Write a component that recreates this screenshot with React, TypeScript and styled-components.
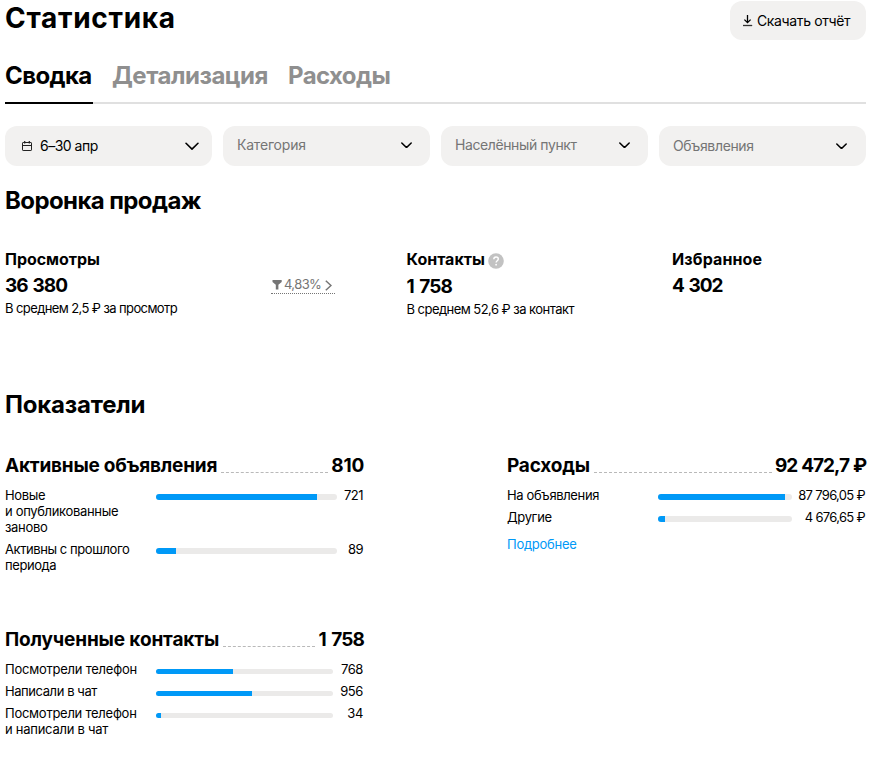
import React from "react";
import styled, { createGlobalStyle } from "styled-components";

const GlobalStyle = createGlobalStyle`
  *, *::before, *::after { box-sizing: border-box; }
  body {
    margin: 0;
    background: #fff;
    color: #000;
    font-family: Inter, "Noto Sans", sans-serif;
  }
  button { font: inherit; color: inherit; border: 0; padding: 0; background: none; }
`;

const Page = styled.main`
  width: 886px;
  min-height: 759px;
  padding: 0 20px 0 5px;
`;

const Text = styled.span<{ $ls?: number; $ws?: number }>`
  letter-spacing: ${(p) => p.$ls ?? 0}px;
  word-spacing: ${(p) => p.$ws ?? 0}px;
  white-space: pre-line;
`;

const Header = styled.header`
  display: flex;
  justify-content: space-between;
  height: 58px;
`;

const Title = styled.h1`
  margin: 0;
  font-size: 28px;
  line-height: 36px;
  font-weight: 700;
`;

const DownloadButton = styled.button`
  display: flex;
  align-items: center;
  gap: 4px;
  width: 136px;
  height: 39px;
  margin-top: 1px;
  padding: 0 0 0 12px;
  border-radius: 12px;
  background: #f2f1f0;
  font-size: 14px;
`;

const Tabs = styled.nav`
  display: flex;
  gap: 19px;
  height: 46px;
  margin-bottom: 22px;
  box-shadow: inset 0 -2px #e0e0e0;
`;

const Tab = styled.button<{ $active?: boolean; $width: number }>`
  display: flex;
  width: ${(p) => p.$width}px;
  padding-top: 3px;
  font-size: 24px;
  line-height: 30px;
  font-weight: 700;
  white-space: nowrap;
  color: ${(p) => (p.$active ? "#000" : "#8f8f8f")};
  border-bottom: 2px solid ${(p) => (p.$active ? "#000" : "transparent")};
`;

const Filters = styled.div`
  display: grid;
  grid-template-columns: repeat(4, 207px);
  gap: 11px;
`;

const Filter = styled.button<{ $filled?: boolean; $padX?: string }>`
  display: flex;
  align-items: center;
  gap: 7px;
  height: 40px;
  padding: ${(p) => p.$padX ?? "0 18px 2px 14px"};
  border-radius: 12px;
  background: #f2f1f0;
  font-size: 14px;
  line-height: 20px;
  color: ${(p) => (p.$filled ? "#000" : "#757575")};
  svg:last-child { margin-left: auto; color: #000; }
`;

const SectionTitle = styled.h2<{ $gap: number }>`
  margin: ${(p) => p.$gap}px 0 0;
  font-size: 24px;
  line-height: 30px;
  font-weight: 700;
`;

const Funnel = styled.section`
  display: grid;
  grid-template-columns: 265px 136.5px 265.5px 1fr;
  height: 140px;
  margin-top: 34px;
`;

const Metric = styled.div`
  display: flex;
  flex-direction: column;
  align-items: flex-start;
`;

const MetricName = styled.div<{ $tall?: boolean }>`
  display: flex;
  align-items: flex-start;
  gap: 3px;
  height: ${(p) => (p.$tall ? 23 : 22)}px;
  font-size: 16px;
  line-height: 19px;
  font-weight: 700;
  svg { margin-top: 3px; }
`;

const MetricValue = styled.div`
  font-size: 19px;
  line-height: 28px;
  font-weight: 700;
`;

const MetricNote = styled.div`
  font-size: 13px;
  line-height: 17px;
  white-space: nowrap;
`;

const Conversion = styled.a`
  display: flex;
  align-items: center;
  gap: 2px;
  width: 64px;
  height: 18px;
  margin: 26px 0 0 1px;
  padding: 0 3px 1px 1px;
  border-bottom: 1px dotted #757575;
  color: #757575;
  font-size: 13px;
  svg:last-child { margin: 2px 0 0 auto; }
`;

const Indicators = styled.section`
  display: grid;
  grid-template-columns: 359px 359px;
  grid-template-rows: 174px auto;
  column-gap: 143px;
  margin-top: 33px;
`;

const IndicatorHead = styled.div`
  display: flex;
  font-size: 19px;
  line-height: 26px;
  font-weight: 700;
  white-space: nowrap;
`;

const Leader = styled.i`
  flex: 1;
  height: 20px;
  margin: 0 3px 0 4px;
  border-bottom: 1px dashed #b9b9b9;
`;

const Bars = styled.div`
  display: grid;
  row-gap: 6px;
  margin-top: 8px;
  font-size: 13px;
  line-height: 16px;
`;

const BarRow = styled.div<{ $track: number }>`
  display: grid;
  grid-template-columns: 151px ${(p) => p.$track}px 1fr;
  white-space: nowrap;
`;

const Track = styled.div<{ $thin?: boolean }>`
  height: ${(p) => (p.$thin ? 5 : 6)}px;
  margin-top: ${(p) => (p.$thin ? 8 : 7)}px;
  border-radius: 3px;
  overflow: hidden;
  background: #ebeae9;
`;

const Fill = styled.div`
  height: 100%;
  background: #0099f7;
`;

const Amount = styled.div`
  padding-right: 1px;
  text-align: right;
`;

const DetailsLink = styled.a`
  display: inline-block;
  margin-top: 11px;
  font-size: 13px;
  line-height: 16px;
  color: #0099f7;
`;

const Chevron = ({ size = 11 }: { size?: number }) => (
  <svg width={size} height={size * 0.6} viewBox="0 0 11 6.6" fill="none" stroke="currentColor" strokeWidth={size > 11 ? 1.25 : 1.5} strokeLinecap="round" strokeLinejoin="round">
    <path d="M.8 1 5.5 5.6 10.2 1" />
  </svg>
);

const DownloadIcon = () => (
  <svg width="11" height="12" viewBox="0 0 11 12" fill="none" stroke="#000" strokeWidth="1.3">
    <path d="M5.5 0v7.5M2.4 4.6l3.1 3.1 3.1-3.1" />
    <path d="M1 10.5h9.2" stroke="#333" />
  </svg>
);

const CalendarIcon = () => (
  <svg width="12" height="12" viewBox="0 0 12 12" fill="none" stroke="#222">
    <rect x="1.5" y="2.5" width="9" height="8" rx=".6" />
    <path d="M1.5 5.5h9M3.7 1v2.4M8.3 1v2.4" strokeWidth="1.2" />
  </svg>
);

const HelpIcon = () => (
  <svg width="16" height="16" viewBox="0 0 16 16">
    <circle cx="8" cy="8" r="7.8" fill="#c2c2c2" />
    <path d="M5.8 6.2c0-3.1 4.5-2.9 4.5-.2 0 1.7-2.2 1.7-2.2 3.5" fill="none" stroke="#fff" strokeWidth="1.4" />
    <circle cx="8.1" cy="11.7" r=".9" fill="#fff" />
  </svg>
);

const FunnelIcon = () => (
  <svg width="10" height="11" viewBox="0 0 10 11">
    <path d="M.5 1h9.2v2L6.4 5.8v4.7H3.8V5.8L.5 3z" fill="#757575" />
  </svg>
);

const ArrowIcon = () => (
  <svg width="7" height="11" viewBox="0 0 7 11" fill="none" stroke="#757575" strokeWidth="1.5">
    <path d="M.8.8 6 5.5.8 10.2" />
  </svg>
);

type Line = { label: string; ls: number; value: string; vls: number; fill: number };
type IndicatorProps = {
  title: string; ls: number; total: string; tls: number; tws?: number;
  track: number; thin?: boolean; lines: Line[]; children?: React.ReactNode;
};

const Indicator = ({ title, ls, total, tls, tws, track, thin, lines, children }: IndicatorProps) => (
  <div>
    <IndicatorHead>
      <Text $ls={ls}>{title}</Text>
      <Leader />
      <Text $ls={tls} $ws={tws}>{total}</Text>
    </IndicatorHead>
    <Bars>
      {lines.map((l) => (
        <BarRow key={l.label} $track={track}>
          <Text $ls={l.ls}>{l.label}</Text>
          <Track $thin={thin}><Fill style={{ width: l.fill }} /></Track>
          <Amount><Text $ls={l.vls}>{l.value}</Text></Amount>
        </BarRow>
      ))}
    </Bars>
    {children}
  </div>
);

export default function App() {
  return (
    <>
      <GlobalStyle />
      <Page>
        <Header>
          <Title><Text $ls={0.7}>Статистика</Text></Title>
          <DownloadButton><DownloadIcon /><Text $ls={-0.36}>Скачать отчёт</Text></DownloadButton>
        </Header>
        <Tabs>
          <Tab $active $width={88}><Text $ls={-0.6}>Сводка</Text></Tab>
          <Tab $width={157}><Text $ls={-0.5}>Детализация</Text></Tab>
          <Tab $width={104}><Text $ls={-0.6}>Расходы</Text></Tab>
        </Tabs>
        <Filters>
          <Filter $filled $padX="0 13px 0 16px">
            <CalendarIcon />
            <Text $ls={-0.5}>6–30 апр</Text>
            <Chevron size={14} />
          </Filter>
          <Filter><Text $ls={-0.2}>Категория</Text><Chevron /></Filter>
          <Filter><Text $ls={-0.4}>Населённый пункт</Text><Chevron /></Filter>
          <Filter $padX="0 19px 0 14px"><Text $ls={-0.35}>Объявления</Text><Chevron /></Filter>
        </Filters>

        <SectionTitle $gap={20}><Text $ls={-0.6}>Воронка продаж</Text></SectionTitle>
        <Funnel>
          <Metric>
            <MetricName><Text $ls={-0.05}>Просмотры</Text></MetricName>
            <MetricValue><Text $ls={-0.9} $ws={1}>36 380</Text></MetricValue>
            <MetricNote><Text $ls={-0.6}>В среднем 2,5 ₽ за просмотр</Text></MetricNote>
          </Metric>
          <Conversion><FunnelIcon /><Text $ls={-0.6}>4,83%</Text><ArrowIcon /></Conversion>
          <Metric>
            <MetricName $tall><Text>Контакты</Text><HelpIcon /></MetricName>
            <MetricValue><Text $ls={-0.9} $ws={1.8}>1 758</Text></MetricValue>
            <MetricNote><Text $ls={-0.54}>В среднем 52,6 ₽ за контакт</Text></MetricNote>
          </Metric>
          <Metric>
            <MetricName><Text $ls={0.12}>Избранное</Text></MetricName>
            <MetricValue><Text $ls={-1.1} $ws={1.4}>4 302</Text></MetricValue>
          </Metric>
        </Funnel>

        <SectionTitle $gap={0}><Text $ls={-0.2}>Показатели</Text></SectionTitle>
        <Indicators>
          <Indicator title="Активные объявления" ls={-0.22} total="810" tls={-0.2} track={181}
            lines={[
              { label: "Новые\nи опубликованные\nзаново", ls: -0.33, value: "721", vls: -0.5, fill: 161 },
              { label: "Активны с прошлого\nпериода", ls: -0.42, value: "89", vls: -0.5, fill: 20 },
            ]} />
          <Indicator title="Расходы" ls={-0.2} total="92 472,7 ₽" tls={-1} tws={0.4} track={134}
            lines={[
              { label: "На объявления", ls: -0.35, value: "87 796,05 ₽", vls: -0.68, fill: 127 },
              { label: "Другие", ls: -0.35, value: "4 676,65 ₽", vls: -0.68, fill: 7 },
            ]}>
            <DetailsLink><Text $ls={-0.25}>Подробнее</Text></DetailsLink>
          </Indicator>
          <Indicator title="Полученные контакты" ls={-0.13} total="1 758" tls={-0.9} tws={2} track={177} thin
            lines={[
              { label: "Посмотрели телефон", ls: -0.24, value: "768", vls: -0.4, fill: 77 },
              { label: "Написали в чат", ls: -0.42, value: "956", vls: -0.4, fill: 96 },
              { label: "Посмотрели телефон\nи написали в чат", ls: -0.26, value: "34", vls: -0.4, fill: 5 },
            ]} />
        </Indicators>
      </Page>
    </>
  );
}
